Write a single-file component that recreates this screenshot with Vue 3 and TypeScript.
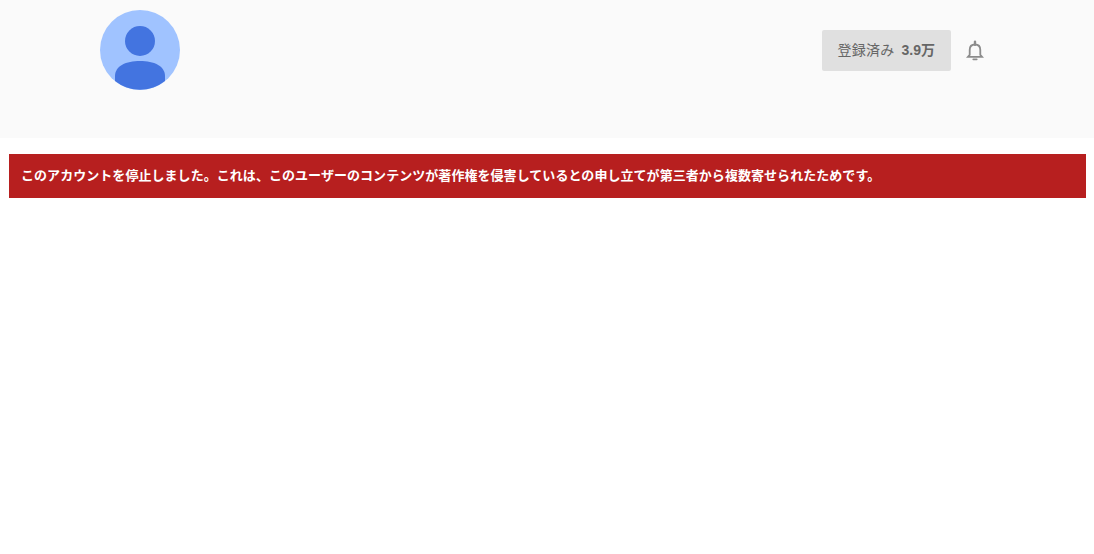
<script setup lang="ts">
const subscriberCount = "3.9万";
const notice =
  "このアカウントを停止しました。これは、このユーザーのコンテンツが著作権を侵害しているとの申し立てが第三者から複数寄せられたためです。";
</script>

<template>
  <div class="page">
    <header class="channel-header">
      <svg class="avatar" viewBox="0 0 80 80" aria-hidden="true">
        <circle cx="40" cy="40" r="40" fill="#a0c3ff" />
        <circle cx="40" cy="31" r="15" fill="#4374e0" />
        <path
          d="M15 71 V66 C15 56 26 51 40 51 C54 51 65 56 65 66 V71 A40 40 0 0 1 15 71 Z"
          fill="#4374e0"
        />
      </svg>
      <div class="actions">
        <button class="subscribed" type="button">
          <span class="label">登録済み</span>
          <span class="count">{{ subscriberCount }}</span>
        </button>
        <button class="bell" type="button" aria-label="通知">
          <svg viewBox="0 0 24 24" width="24" height="24" aria-hidden="true">
            <g fill="none" stroke="#8c8c8c" stroke-width="1.8">
              <path d="M5 17.800 h14 l-1.700-1.900 v-4.900 c0-3.400-2.100-5.500-5.300-5.500 s-5.300 2.100-5.300 5.500 v4.900 z" />
              <path d="M12 2.700 v3" stroke-width="2.400" stroke-linecap="round" />
              <path d="M10.300 20.300 h3.400" stroke-width="1.800" stroke-linecap="round" />
            </g>
          </svg>
        </button>
      </div>
    </header>
    <div class="notice">{{ notice }}</div>
  </div>
</template>

<style>
html,
body {
  background: #fff;
}
</style>

<style scoped>
.page {
  height: 554px;
  overflow: hidden;
  background: #fff;
  font-family: "Liberation Sans", "Noto Sans CJK JP", sans-serif;
}

.channel-header {
  display: flex;
  justify-content: space-between;
  align-items: flex-start;
  height: 138px;
  box-sizing: border-box;
  padding: 10px 107px 0 100px;
  background: #fafafa;
}

.avatar {
  display: block;
  width: 80px;
  height: 80px;
}

.actions {
  display: flex;
  align-items: center;
  gap: 12px;
  margin-top: 20px;
}

.subscribed {
  display: flex;
  align-items: center;
  gap: 7px;
  height: 41px;
  padding: 0 16px 3px 16px;
  border: none;
  border-radius: 2px;
  background: #e0e0e0;
  color: #666;
  font-family: inherit;
  font-size: 14px;
}

.label {
  letter-spacing: 0.25px;
}

.count {
  font-weight: 700;
}

.bell {
  display: flex;
  width: 24px;
  height: 24px;
  padding: 0;
  border: none;
  background: none;
}

.notice {
  display: flex;
  align-items: center;
  height: 44px;
  box-sizing: border-box;
  margin: 16px 8px 0 9px;
  padding: 0 12px 4px;
  background: #b71f1f;
  color: #fff;
  font-size: 13px;
  font-weight: 700;
  letter-spacing: 0.05px;
}
</style>
